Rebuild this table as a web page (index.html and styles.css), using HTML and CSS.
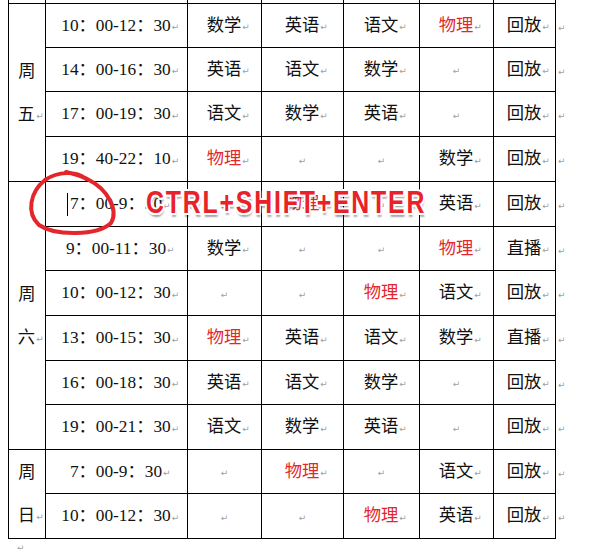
FILE: index.html
```html
<!DOCTYPE html>
<html lang="zh-CN">
<head>
<meta charset="utf-8">
<title>课表</title>
<link rel="stylesheet" href="styles.css">
</head>
<body>
<div class="page">
  <div class="grid">
    <div class="c top"></div><div class="c top"></div><div class="c top"></div><div class="c top"></div><div class="c top"></div><div class="c top"></div><div class="c top"></div><div class="end"></div>

    <div class="c day span4"><div>周</div><div>五<i class="pm h">↵</i></div></div>
    <div class="c t">10：00-12：30<i class="pm h">↵</i></div><div class="c">数学<i class="pm h">↵</i></div><div class="c">英语<i class="pm h">↵</i></div><div class="c">语文<i class="pm h">↵</i></div><div class="c r">物理<i class="pm h">↵</i></div><div class="c">回放<i class="pm h">↵</i></div><div class="end"><i class="pm">↵</i></div>
    <div class="c t">14：00-16：30<i class="pm h">↵</i></div><div class="c">英语<i class="pm h">↵</i></div><div class="c">语文<i class="pm h">↵</i></div><div class="c">数学<i class="pm h">↵</i></div><div class="c"><i class="pm">↵</i></div><div class="c">回放<i class="pm h">↵</i></div><div class="end"><i class="pm">↵</i></div>
    <div class="c t">17：00-19：30<i class="pm h">↵</i></div><div class="c">语文<i class="pm h">↵</i></div><div class="c">数学<i class="pm h">↵</i></div><div class="c">英语<i class="pm h">↵</i></div><div class="c"><i class="pm">↵</i></div><div class="c">回放<i class="pm h">↵</i></div><div class="end"><i class="pm">↵</i></div>
    <div class="c t">19：40-22：10<i class="pm h">↵</i></div><div class="c r">物理<i class="pm h">↵</i></div><div class="c"><i class="pm">↵</i></div><div class="c"><i class="pm">↵</i></div><div class="c">数学<i class="pm h">↵</i></div><div class="c">回放<i class="pm h">↵</i></div><div class="end"><i class="pm">↵</i></div>

    <div class="c day span6"><div>周</div><div>六<i class="pm h">↵</i></div></div>
    <div class="c t"><span class="caret"></span>7：00-9：30<i class="pm h">↵</i></div><div class="c"><i class="pm">↵</i></div><div class="c r">物理<i class="pm h">↵</i></div><div class="c"><i class="pm">↵</i></div><div class="c">英语<i class="pm h">↵</i></div><div class="c">回放<i class="pm h">↵</i></div><div class="end"><i class="pm">↵</i></div>
    <div class="c t">9：00-11：30<i class="pm h">↵</i></div><div class="c">数学<i class="pm h">↵</i></div><div class="c"><i class="pm">↵</i></div><div class="c"><i class="pm">↵</i></div><div class="c r">物理<i class="pm h">↵</i></div><div class="c">直播<i class="pm h">↵</i></div><div class="end"><i class="pm">↵</i></div>
    <div class="c t">10：00-12：30<i class="pm h">↵</i></div><div class="c"><i class="pm">↵</i></div><div class="c"><i class="pm">↵</i></div><div class="c r">物理<i class="pm h">↵</i></div><div class="c">语文<i class="pm h">↵</i></div><div class="c">回放<i class="pm h">↵</i></div><div class="end"><i class="pm">↵</i></div>
    <div class="c t">13：00-15：30<i class="pm h">↵</i></div><div class="c r">物理<i class="pm h">↵</i></div><div class="c">英语<i class="pm h">↵</i></div><div class="c">语文<i class="pm h">↵</i></div><div class="c">数学<i class="pm h">↵</i></div><div class="c">直播<i class="pm h">↵</i></div><div class="end"><i class="pm">↵</i></div>
    <div class="c t">16：00-18：30<i class="pm h">↵</i></div><div class="c">英语<i class="pm h">↵</i></div><div class="c">语文<i class="pm h">↵</i></div><div class="c">数学<i class="pm h">↵</i></div><div class="c"><i class="pm">↵</i></div><div class="c">回放<i class="pm h">↵</i></div><div class="end"><i class="pm">↵</i></div>
    <div class="c t">19：00-21：30<i class="pm h">↵</i></div><div class="c">语文<i class="pm h">↵</i></div><div class="c">数学<i class="pm h">↵</i></div><div class="c">英语<i class="pm h">↵</i></div><div class="c"><i class="pm">↵</i></div><div class="c">回放<i class="pm h">↵</i></div><div class="end"><i class="pm">↵</i></div>

    <div class="c day span2"><div>周</div><div>日<i class="pm h">↵</i></div></div>
    <div class="c t">7：00-9：30<i class="pm h">↵</i></div><div class="c"><i class="pm">↵</i></div><div class="c r">物理<i class="pm h">↵</i></div><div class="c"><i class="pm">↵</i></div><div class="c">语文<i class="pm h">↵</i></div><div class="c">回放<i class="pm h">↵</i></div><div class="end"><i class="pm">↵</i></div>
    <div class="c t">10：00-12：30<i class="pm h">↵</i></div><div class="c"><i class="pm">↵</i></div><div class="c"><i class="pm">↵</i></div><div class="c r">物理<i class="pm h">↵</i></div><div class="c">英语<i class="pm h">↵</i></div><div class="c">回放<i class="pm h">↵</i></div><div class="end"><i class="pm">↵</i></div>
  </div>
  <div class="after"><i class="pm">↵</i></div>

  <svg class="circle" width="604" height="549" viewBox="0 0 604 549" aria-hidden="true">
    <path d="M86 179 C76 171 58 171 45 180 C30 192 26 213 39 225 C55 236 97 236 111 223 C119 210 107 189 89 180 C82 176 75 174 66 172" fill="none" stroke="#e3262b" stroke-width="4" stroke-linecap="round"/>
  </svg>
  <div class="hotkey">CTRL+SHIFT+ENTER</div>
</div>
</body>
</html>
```

FILE: styles.css
```css
html, body {
  margin: 0;
  padding: 0;
  background: #ffffff;
}

body {
  font-family: "Liberation Serif", "Noto Sans CJK SC", serif;
  font-size: 17.3px;
  color: #111111;
  width: 604px;
  height: 549px;
  overflow: hidden;
}

.page {
  position: relative;
  width: 604px;
  height: 549px;
  padding-left: 8px;
  box-sizing: border-box;
}

.grid {
  display: grid;
  grid-template-columns: 37px 142px 74px 82px 76px 74px 62px 40px;
  grid-template-rows: 4px 44px 44px 45px 45px 45px 44px 45px 45px 44px 45px 44px 45px;
  width: 548px;
  border-left: 1px solid #000;
}

.c {
  box-sizing: border-box;
  border-right: 1px solid #000;
  border-bottom: 1px solid #000;
  display: flex;
  align-items: center;
  justify-content: center;
  white-space: nowrap;
  line-height: 20px;
}

.c.r {
  color: #e3262b;
}

.day {
  flex-direction: column;
  line-height: 43px;
}

.day > div {
  display: flex;
  align-items: center;
}

.span4 { grid-row: span 4; }
.span6 { grid-row: span 6; }
.span2 { grid-row: span 2; }

.end {
  display: flex;
  align-items: center;
  padding-left: 2px;
}

.pm {
  font-style: normal;
  font-family: "DejaVu Sans", sans-serif;
  font-size: 9px;
  line-height: 9px;
  color: #a0a0a0;
  position: relative;
  top: 2px;
}

.pm.h {
  display: inline-block;
  width: 0;
  margin-left: 1px;
  overflow: visible;
}

.caret {
  display: inline-block;
  width: 0;
  height: 23px;
  border-left: 1px solid #000;
  margin-left: -3px;
  margin-right: 2px;
}

.after {
  padding-left: 9px;
  height: 12px;
  display: flex;
  align-items: flex-start;
  padding-top: 3px;
}

.circle {
  position: absolute;
  left: 0;
  top: 0;
  pointer-events: none;
}

.hotkey {
  position: absolute;
  left: 146px;
  top: 187px;
  font-family: "Liberation Sans", Arial, sans-serif;
  font-weight: bold;
  font-size: 31px;
  line-height: 31px;
  letter-spacing: 2.3px;
  color: #e8222a;
  transform: scaleX(0.8);
  transform-origin: left center;
  white-space: nowrap;
  text-shadow:
    -2px 0 0 #fff, 2px 0 0 #fff, 0 -2px 0 #fff, 0 2px 0 #fff,
    -1.5px -1.5px 0 #fff, 1.5px -1.5px 0 #fff, -1.5px 1.5px 0 #fff, 1.5px 1.5px 0 #fff,
    1px 4px 2px rgba(0, 0, 0, 0.35);
}
```
